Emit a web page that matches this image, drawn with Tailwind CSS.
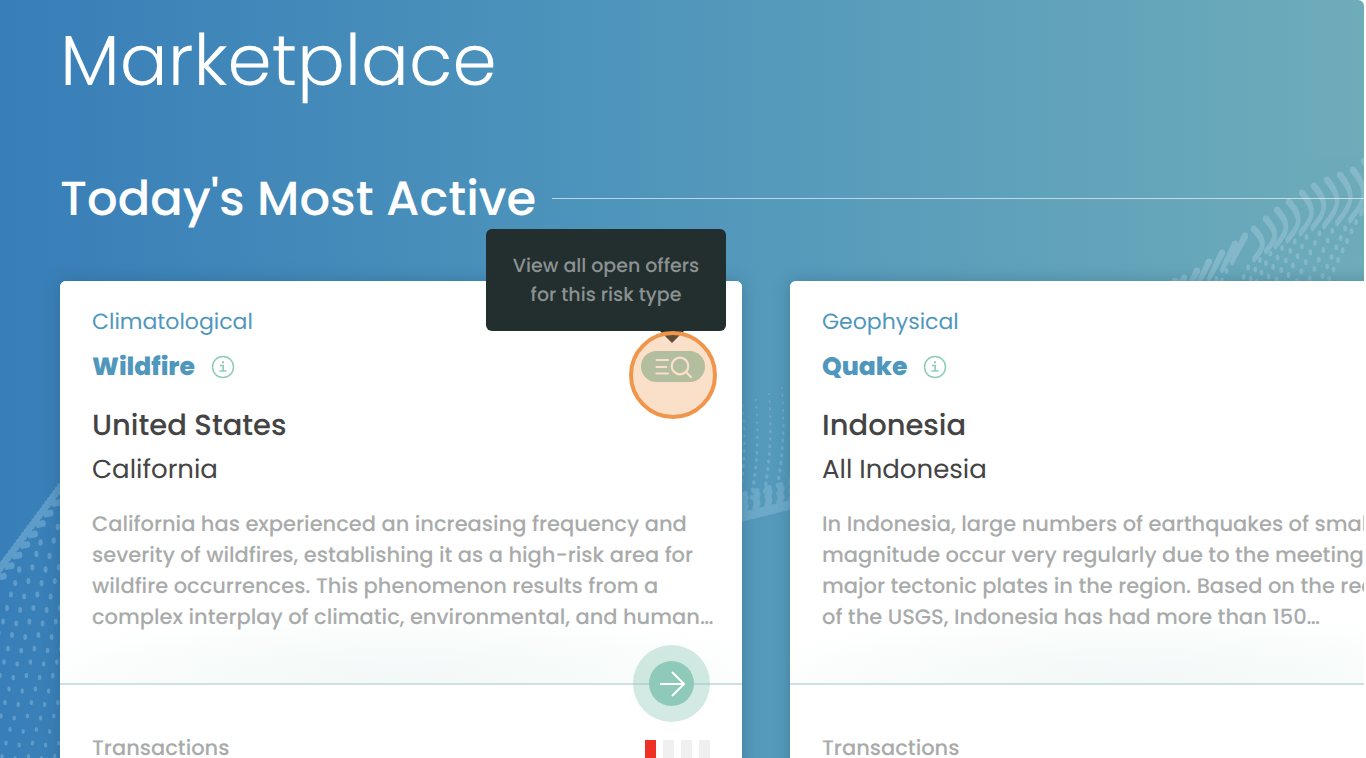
<!DOCTYPE html>
<html lang="en">
<head>
<meta charset="utf-8">
<meta name="viewport" content="width=device-width, initial-scale=1">
<title>Marketplace</title>
<script src="https://cdn.jsdelivr.net/npm/@tailwindcss/browser@4"></script>
</head>
<body class="overflow-hidden bg-white font-['Poppins','Inter',sans-serif] [text-rendering:geometricPrecision]">
<div class="relative isolate mr-[2px] h-screen overflow-hidden rounded-tr-md bg-linear-to-r from-[#387eb8] via-[#4c93bb] via-41% to-[#6eacba]">
  <svg class="absolute top-0 left-0 -z-10" width="1366" height="758" viewBox="0 0 1366 758" aria-hidden="true">
    <g id="wave-left" fill="#6ba6cf" opacity=".75"></g>
    <g id="wave-mid" fill="#74adcd" opacity=".8"></g>
    <g id="wave-right" fill="#8bbccd" opacity=".8"></g>
  </svg>

  <main class="pl-[60px]">
    <h1 class="pt-4 text-[71px] leading-[88px] font-light text-white">Marketplace</h1>
    <div class="mt-[61px] flex items-center gap-4">
      <h2 class="pt-[2px] text-[48px] leading-[64px] font-medium whitespace-nowrap text-white">Today's Most Active</h2>
      <div class="h-px flex-1 bg-white/60"></div>
    </div>

    <div class="mt-[50px] flex gap-12">
      <article class="relative w-[682px] shrink-0 rounded-t-md bg-white shadow-[0_0_16px_rgba(30,80,110,0.35)]">
        <div class="h-[404px] border-b-2 border-[#cfdfe6] bg-radial-[ellipse_60%_18%_at_50%_100%] from-[#f3f8f8] via-[#f7fbfa] via-50% to-white to-100% rounded-t-md px-8 pt-[21px]">
          <p class="text-[22px] leading-10 text-[#4f97bd]">Climatological</p>
          <div class="flex h-[50px] items-center gap-4">
            <h3 class="text-[25px] leading-10 font-extrabold text-[#4f97bd]">Wildfire</h3>
            <button type="button" aria-label="About Wildfire" class="text-[#8fcbb9]">
              <svg width="24" height="24" viewBox="0 0 24 24" fill="none" stroke="currentColor"><circle cx="12" cy="12" r="10.5" stroke-width="1.5"/><path d="M9 10.5h3.2v5.5M8.5 16h7" stroke-width="1.7"/><path d="M11 6.2h2v2h-2z" fill="currentColor" stroke="none"/></svg>
            </button>
          </div>
          <h4 class="mt-3 text-[29px] leading-11 font-medium text-[#444]">United States</h4>
          <p class="text-[26px] leading-11 text-[#444]">California</p>
          <p class="mt-[17px] text-[21px] leading-[31px] font-medium whitespace-nowrap text-[#a9abab]">California has experienced an increasing frequency and<br>severity of wildfires, establishing it as a high-risk area for<br>wildfire occurrences. This phenomenon results from a<br>complex interplay of climatic, environmental, and human…</p>
        </div>
        <div class="flex h-32 justify-between px-8 pt-11">
          <p class="text-[21px] leading-10 font-medium text-[#a9abab]">Transactions</p>
          <div class="mt-[11px] flex gap-[7px]" role="img" aria-label="Transaction level 1 of 4">
            <span class="h-10 w-[11px] bg-[#ee3124]"></span><span class="h-10 w-[11px] bg-[#f0f0f0]"></span><span class="h-10 w-[11px] bg-[#f0f0f0]"></span><span class="h-10 w-[11px] bg-[#f0f0f0]"></span>
          </div>
        </div>
        <button type="button" aria-label="Open Wildfire" class="absolute top-[364px] right-8 flex size-[77px] items-center justify-center rounded-full bg-[#8fcbb9]/40">
          <span class="flex size-[45px] items-center justify-center rounded-full bg-[#8fc9b9]">
            <svg width="28" height="28" viewBox="0 0 28 28" fill="none" stroke="#fff" stroke-width="2"><path d="M2 14H26M14 2l12 12-12 12"/></svg>
          </span>
        </button>
        <button type="button" aria-label="View all open offers" class="absolute top-[70px] right-[37px] flex h-[31px] w-16 items-center justify-center rounded-full bg-[#98d0c0]">
          <svg width="38" height="24" viewBox="0 0 38 24" fill="none" stroke="#fff" stroke-width="2.2" stroke-linecap="round"><path d="M2.500 5h11.500M2.500 12h9.500M2.500 18.500h11.500"/><circle cx="26" cy="11" r="8.300"/><path d="m32 17 5 5"/></svg>
        </button>
        <div role="tooltip" class="absolute -top-[52px] right-4 w-60 rounded-md bg-[#232e2e] pt-[22px] pb-[22px] text-center text-[19px] leading-[29px] font-medium text-[#8b9292]">
          View all open offers<br>for this risk type
          <span class="absolute top-full left-[174px] h-3 w-6 bg-[#232e2e] [clip-path:polygon(0_0,100%_0,50%_100%)]"></span>
        </div>
        <div class="pointer-events-none absolute top-[50px] right-[25px] size-[88px] rounded-full border-4 border-[#f0964b] bg-[#f0964b]/30"></div>
      </article>

      <article class="relative w-[682px] shrink-0 rounded-t-md bg-white shadow-[0_0_16px_rgba(30,80,110,0.35)]">
        <div class="h-[404px] border-b-2 border-[#cfdfe6] bg-radial-[ellipse_60%_18%_at_50%_100%] from-[#f3f8f8] via-[#f7fbfa] via-50% to-white to-100% rounded-t-md px-8 pt-[21px]">
          <p class="text-[22px] leading-10 text-[#4f97bd]">Geophysical</p>
          <div class="flex h-[50px] items-center gap-4">
            <h3 class="text-[25px] leading-10 font-extrabold text-[#4f97bd]">Quake</h3>
            <button type="button" aria-label="About Quake" class="text-[#8fcbb9]">
              <svg width="24" height="24" viewBox="0 0 24 24" fill="none" stroke="currentColor"><circle cx="12" cy="12" r="10.5" stroke-width="1.5"/><path d="M9 10.5h3.2v5.5M8.5 16h7" stroke-width="1.7"/><path d="M11 6.2h2v2h-2z" fill="currentColor" stroke="none"/></svg>
            </button>
          </div>
          <h4 class="mt-3 text-[29px] leading-11 font-medium text-[#444]">Indonesia</h4>
          <p class="text-[26px] leading-11 text-[#444]">All Indonesia</p>
          <p class="mt-[17px] text-[21px] leading-[31px] font-medium whitespace-nowrap text-[#a9abab]">In Indonesia, large numbers of earthquakes of small<br>magnitude occur very regularly due to the meeting of<br>major tectonic plates in the region. Based on the records<br>of the USGS, Indonesia has had more than 150…</p>
        </div>
        <div class="h-32 px-8 pt-11">
          <p class="text-[21px] leading-10 font-medium text-[#a9abab]">Transactions</p>
        </div>
      </article>
    </div>
  </main>
</div>
<script>
  // Decorative dotted waves behind the cards
  function dot(id, x, y, rx, ry) {
    const e = document.createElementNS('http://www.w3.org/2000/svg', 'ellipse');
    e.setAttribute('cx', x); e.setAttribute('cy', y); e.setAttribute('rx', rx); e.setAttribute('ry', ry);
    document.getElementById(id).appendChild(e);
  }
  // Left: dense crest with dots fanning out below it
  for (let i = 0; i < 26; i++) {
    const x = i * 2.6 - 2, y = 571 - i * 3.5;
    dot('wave-left', x, y, 3.2, 4.2);
    dot('wave-left', x + 1, y + 6 + (i % 3) * 3, 2.6, 3.6);
  }
  for (let r = 0; r < 20; r++)
    for (let c = -1; c < 6; c++) {
      const x = c * 13.2 + (r * 9) % 13, y = 500 + r * 13.5 + (c % 2) * 2;
      if (y > 592 - x * 1.4) dot('wave-left', x, y, 2.2 - r * 0.03, 3.4 - r * 0.05);
    }
  // Middle: rising columns of dots over a thick, ragged crest
  for (let c = 0; c < 5; c++)
    for (let k = 0; k < 14; k++) {
      const s = 0.8 + k * 0.09;
      dot('wave-mid', 743 + c * 13 + 3 * Math.sin(k / 4) - k * 0.3, 406 - c * 6 + k * 7.5, s, s + 0.5);
    }
  for (let i = 0; i < 26; i++) {
    const peak = i % 6 === 1 || i % 6 === 2 ? 7 : 2;
    for (let j = 0; j < peak; j++)
      dot('wave-mid', 741 + i * 2 + (j % 2), 519 - i * 0.5 - j * 4, 2.6, 3);
  }
  // Right: curved ribs that break up into separate dots
  const crest = [[1364, 161], [1353, 170], [1340, 175], [1327, 180], [1314, 186], [1302, 193], [1289, 202], [1277, 210], [1266, 219], [1254, 229], [1243, 236], [1233, 244], [1220, 253], [1207, 262], [1195, 271], [1182, 278], [1173, 281]];
  crest.forEach(([x, top], c) => {
    const bow = 11 - c * 0.3, len = c < 10 ? 54 - c * 2.5 : 28;
    const shift = y => c < 10 ? bow * Math.sin(Math.PI * Math.min(y / (48 - c * 2), 1.1)) : -y * 0.5 + 2;
    for (let y = 0; y < len; y += 2) {
      const w = 3.2 - Math.min(y / 20, 1.3);
      dot('wave-right', x + shift(y), top + y, w, 3.4);
    }
    for (let y = top + len + 7, k = 1; y < 284; y += 9.5, k++)
      dot('wave-right', x + shift(len) - k * 4.5, y, 1.9, 3);
  });
</script>
</body>
</html>
